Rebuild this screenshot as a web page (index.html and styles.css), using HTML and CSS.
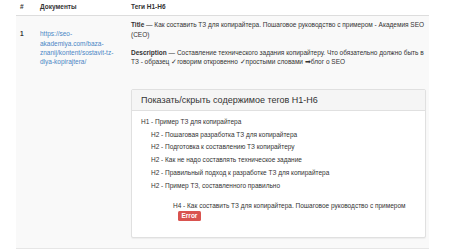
FILE: index.html
```html
<!DOCTYPE html>
<html>
<head>
<meta charset="utf-8">
<link rel="stylesheet" href="styles.css">
</head>
<body>
<table class="tbl">
  <thead>
    <tr>
      <th class="c-num">#</th>
      <th class="c-doc">Документы</th>
      <th class="c-tags">Теги H1-H6</th>
    </tr>
  </thead>
  <tbody>
    <tr class="odd">
      <td class="c-num"><b>1</b></td>
      <td class="c-doc"><a class="link" href="#">https://seo-akademiya.com/baza-znanij/kontent/sostavit-tz-dlya-kopirajtera/</a></td>
      <td class="c-tags">
        <div class="meta"><b>Title</b> — Как составить ТЗ для копирайтера. Пошаговое руководство с примером - Академия SEO (CEO)</div>
        <div class="meta gap"><b>Description</b> — Составление технического задания копирайтеру. Что обязательно должно быть в ТЗ - образец ✓говорим откровенно ✓простыми словами ➡блог о SEO</div>
        <div class="panel">
          <div class="panel-head">Показать/скрыть содержимое тегов H1-H6</div>
          <div class="panel-body">
            <div class="h h1">H1 - Пример ТЗ для копирайтера</div>
            <div class="h h2">H2 - Пошаговая разработка ТЗ для копирайтера</div>
            <div class="h h2">H2 - Подготовка к составлению ТЗ копирайтеру</div>
            <div class="h h2">H2 - Как не надо составлять техническое задание</div>
            <div class="h h2">H2 - Правильный подход к разработке ТЗ для копирайтера</div>
            <div class="h h2">H2 - Пример ТЗ, составленного правильно</div>
            <div class="h h4">H4 - Как составить ТЗ для копирайтера. Пошаговое руководство с примером
              <div><span class="badge">Error</span></div>
            </div>
          </div>
        </div>
      </td>
    </tr>
  </tbody>
</table>
</body>
</html>
```

FILE: styles.css
```css
html, body {
  margin: 0;
  padding: 0;
  background: #fff;
}
body {
  font-family: "Liberation Sans", Arial, sans-serif;
  font-size: 6.5px;
  line-height: 9.3px;
  color: #333;
}
.tbl {
  margin-left: 16px;
  width: 413px;
  border-collapse: collapse;
  border-spacing: 0;
}
.tbl th {
  text-align: left;
  font-weight: bold;
  padding: 2px 4px 4px 4px;
  height: 9px;
  border-bottom: 1.5px solid #ddd;
  vertical-align: bottom;
}
.tbl td {
  padding: 4px 4px 10px 4px;
  vertical-align: top;
  border-bottom: 1px solid #e6e6e6;
}
.odd td {
  background: #f9f9f9;
}
.c-num { width: 12px; }
.c-doc { width: 83px; }
.c-num b { display: block; margin-top: 9px; }
.link {
  display: block;
  margin-top: 9px;
  color: #4a86c5;
  text-decoration: none;
}
.meta { margin: 0; }
.meta.gap { margin-top: 9.3px; }
.panel {
  margin-top: 22px;
  margin-right: -1px;
  border: 1px solid #e0e0e0;
  border-radius: 2px;
  background: #fff;
  box-shadow: 0 1px 1px rgba(0,0,0,0.05);
}
.panel-head {
  background: #f5f5f5;
  border-bottom: 1px solid #e0e0e0;
  padding: 5px 9px;
  font-size: 9px;
  line-height: 10px;
}
.panel-body {
  padding: 6px 9px 13px 9px;
}
.h {
  margin-bottom: 3.5px;
}
.h2 { padding-left: 10px; }
.h4 { padding-left: 32px; margin-top: 11px; }
.badge {
  display: inline-block;
  margin-left: 5px;
  margin-top: 0.5px;
  background: #d9534f;
  color: #fff;
  font-weight: bold;
  font-size: 6.5px;
  line-height: 9px;
  padding: 0.5px 3.5px;
  border-radius: 1.5px;
}
```
